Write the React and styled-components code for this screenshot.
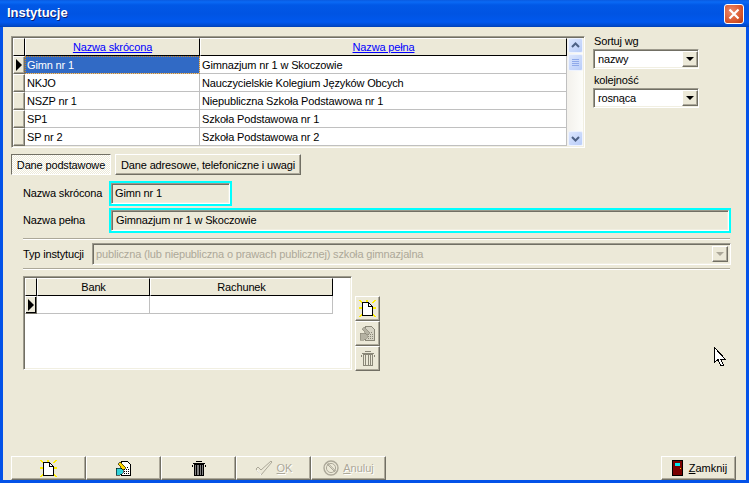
import React from "react";
import styled, { createGlobalStyle, css } from "styled-components";

const Global = createGlobalStyle`
  html, body { margin: 0; padding: 0; background: #ece9d8; }
  * { box-sizing: border-box; }
`;

const sunken = css`
  border: 1px solid;
  border-color: #9d9a8c #fff #fff #9d9a8c;
  box-shadow: inset 1px 1px 0 #716f64, inset -1px -1px 0 #f1efe2;
`;

const raised = css`
  border: 1px solid;
  border-color: #fff #716f64 #716f64 #fff;
  box-shadow: inset -1px -1px 0 #aca899;
  background: #ece9d8;
`;

const Window = styled.div`
  position: relative;
  width: 749px;
  height: 483px;
  display: flex;
  flex-direction: column;
  overflow: hidden;
  background: #ece9d8;
  font-family: "Liberation Sans", sans-serif;
  font-size: 11px;
  letter-spacing: -0.15px;
  color: #000;
`;

const TitleBar = styled.div`
  height: 27px;
  flex: none;
  display: flex;
  align-items: center;
  justify-content: space-between;
  padding: 0 5px 2px 7px;
  background: linear-gradient(180deg, #0a5be0 0, #0a6af5 2px, #0158e6 5px, #0054e3 14px, #0058ee 22px, #0048c8 26px, #003fb0 27px);
`;

const Title = styled.span`
  font-size: 13px;
  font-weight: 700;
  letter-spacing: 0;
  color: #fff;
  text-shadow: 1px 1px 0 #0f1e70;
`;

const CloseButton = styled.div`
  width: 20px;
  height: 20px;
  margin-top: 2px;
  border: 1px solid #fff;
  border-radius: 3px;
  background: radial-gradient(circle at 35% 35%, #eb8a6c, #d9582e 60%, #b23a14);
  display: flex;
  align-items: center;
  justify-content: center;
`;

const Body = styled.div`
  flex: 1;
  display: flex;
  flex-direction: column;
  min-height: 0;
  border-style: solid;
  border-color: #0352e8;
  border-width: 0 3px 3px 3px;
  padding: 9px 10px 0 8px;
`;

const TopRow = styled.div`
  display: flex;
  gap: 8px;
  height: 112px;
`;

const GridFrame = styled.div`
  ${sunken}
  position: relative;
  width: ${(p) => p.$width}px;
  height: ${(p) => p.$height}px;
  padding: 1px;
  background: ${(p) => p.$bg};
  display: flex;
  flex: none;
`;

const GridBody = styled.div`
  flex: 1;
  display: flex;
  flex-direction: column;
`;

const Row = styled.div`
  display: grid;
  grid-template-columns: ${(p) => p.$cols};
  height: ${(p) => p.$height}px;
  flex: none;
`;

const HeadCell = styled.div`
  ${raised}
  border-color: #fff #000 #000 #fff;
  box-shadow: none;
  display: flex;
  align-items: center;
  justify-content: center;
  color: ${(p) => (p.$link ? "#0000ff" : "#000")};
  text-decoration: ${(p) => (p.$link ? "underline" : "none")};
`;

const Indicator = styled.div`
  ${raised}
  box-shadow: ${(p) => (p.$dark ? "inset -1px -1px 0 #000" : "inset -1px -1px 0 #aca899")};
  display: flex;
  align-items: center;
  justify-content: center;
`;

const Arrow = styled.i`
  display: block;
  width: 0;
  height: 0;
  border-style: solid;
  border-width: 6px 0 6px 6px;
  border-color: transparent transparent transparent #000;
`;

const Cell = styled.div`
  display: flex;
  align-items: center;
  padding-left: 2px;
  background: ${(p) => (p.$selected ? "#316ac5" : "#fff")};
  color: ${(p) => (p.$selected ? "#fff" : "#000")};
  border-right: 1px solid #c0c0c0;
  border-bottom: 1px solid #c0c0c0;
  outline: ${(p) => (p.$selected ? "1px dotted #c9882a" : "none")};
  outline-offset: -1px;
  white-space: nowrap;
  overflow: hidden;
`;

const Scrollbar = styled.div`
  width: 16px;
  flex: none;
  display: flex;
  flex-direction: column;
  align-items: center;
  background: linear-gradient(90deg, #f3f1ec, #fdfdfa);
`;

const ScrollButton = styled.div`
  width: 15px;
  height: ${(p) => p.$height || 16}px;
  margin-top: ${(p) => p.$top || 0}px;
  border: 1px solid #eef3fe;
  border-radius: 2px;
  background: linear-gradient(135deg, #dce6fd, #b9cdf9);
  display: flex;
  align-items: center;
  justify-content: center;
`;

const SortPanel = styled.div`
  width: 106px;
  display: flex;
  flex-direction: column;
  margin-top: -2px;
`;

const SortLabel = styled.div`
  height: 15px;
  line-height: 15px;
  padding-left: 1px;
`;

const Combo = styled.div`
  ${sunken}
  height: 20px;
  background: #fff;
  display: flex;
  align-items: center;
  justify-content: space-between;
  padding: 2px 0 2px 4px;
  margin-bottom: ${(p) => p.$gap || 0}px;
`;

const ComboButton = styled.div`
  ${raised}
  width: 16px;
  height: 16px;
  display: flex;
  align-items: center;
  justify-content: center;
`;

const ComboArrow = styled.i`
  display: block;
  width: 0;
  height: 0;
  border-style: solid;
  border-width: 4px 4px 0 4px;
  border-color: ${(p) => (p.$off ? "#aca899" : "#000")} transparent transparent transparent;
`;

const Tabs = styled.div`
  display: flex;
  gap: 4px;
  margin-top: 6px;
  height: 21px;
`;

const Tab = styled.div`
  width: ${(p) => p.$width}px;
  display: flex;
  align-items: center;
  justify-content: center;
  white-space: nowrap;
  ${(p) => (p.$active ? css`
    border: 1px solid;
    border-color: #716f64 #fff #fff #716f64;
    background: repeating-conic-gradient(#fff 0 25%, #ece9d8 0 50%) 0 0 / 2px 2px;
  ` : raised)}
`;

const Form = styled.div`
  display: flex;
  flex-direction: column;
  padding: 6px 0 0 12px;
  width: 720px;
`;

const FieldRow = styled.div`
  display: flex;
  align-items: center;
  margin-bottom: 2px;
`;

const FieldLabel = styled.div`
  width: 86px;
  flex: none;
  padding-bottom: 1px;
`;

const Highlight = styled.div`
  width: ${(p) => p.$width}px;
  height: 25px;
  border: 2px solid #0ff;
  display: flex;
`;

const FieldInput = styled.div`
  ${sunken}
  flex: 1;
  background: #ece9d8;
  display: flex;
  align-items: center;
  padding: 0 0 1px ${(p) => p.$pad || 3}px;
`;

const Separator = styled.div`
  height: 2px;
  width: 707px;
  flex: none;
  margin: ${(p) => p.$margin};
  background: linear-gradient(180deg, #aca899 50%, #fff 50%);
`;

const TypeRow = styled.div`
  display: flex;
  align-items: center;
  height: 22px;
`;

const TypeLabel = styled.div`
  width: 69px;
  flex: none;
`;

const DisabledCombo = styled.div`
  ${sunken}
  flex: 1;
  height: 22px;
  background: #ece9d8;
  color: #aca899;
  display: flex;
  align-items: center;
  justify-content: space-between;
  padding: 2px 2px 2px 3px;
`;

const BankSection = styled.div`
  display: flex;
  gap: 3px;
`;

const SideButtons = styled.div`
  display: flex;
  flex-direction: column;
  margin-top: 20px;
`;

const SideButton = styled.div`
  ${raised}
  width: 25px;
  height: 25px;
  display: flex;
  align-items: center;
  justify-content: center;
`;

const Footer = styled.div`
  margin-top: auto;
  height: 24px;
  display: flex;
  justify-content: space-between;
`;

const ToolGroup = styled.div`
  display: flex;
`;

const ToolButton = styled.div`
  ${raised}
  width: 75px;
  height: 24px;
  padding-left: ${(p) => p.$indent || 0}px;
  display: flex;
  align-items: center;
  justify-content: center;
  gap: ${(p) => p.$gap || 0}px;
  color: ${(p) => (p.$off ? "#aca899" : "#000")};
  text-shadow: ${(p) => (p.$off ? "1px 1px 0 #fff" : "none")};
  letter-spacing: 0;
`;

const Key = styled.span`
  text-decoration: underline;
`;

const Cursor = styled.svg`
  position: absolute;
  left: 714px;
  top: 347px;
`;

const NewIcon = () => (
  <svg width="17" height="17" viewBox="0 0 17 17" shapeRendering="crispEdges">
    <path
      fill="#ffee00"
      d="M0 0h2v1H0zM1 1h2v1H1zM2 2h2v1H2zM15 0h2v1h-2zM14 1h2v1h-2zM13 2h2v1h-2zM0 16h2v1H0zM1 15h2v1H1zM2 14h2v1H2zM15 16h2v1h-2zM14 15h2v1h-2zM13 14h2v1h-2zM13 7h4v2h-4zM0 7h3v2H0zM7 0h2v2H7z"
    />
    <path d="M3.5 2.5h6l4 4v9h-10z" fill="#fff" stroke="#000" />
    <path d="M9.5 2.5v4h4" fill="none" stroke="#000" />
  </svg>
);

const EditIcon = ({ off }) => {
  const line = off ? "#8a8778" : "#000";
  return (
    <svg width="17" height="17" viewBox="0 0 17 17" shapeRendering="crispEdges">
      <path d="M6.5 1.5h6l3 3v11h-9z" fill={off ? "#d6d3c4" : "#fff"} stroke={line} />
      <path d="M8 7h6M9 9h5M9 11h5M9 13h5" stroke={line} strokeDasharray="1 1" />
      <path d="M5 2l6 6-3 2-5-6z" fill={off ? "#b5b2a3" : "#ffd800"} stroke={line} strokeWidth="0.6" />
      <path d="M1 8h4l3 2v3l-3 2H1z" fill={off ? "#b5b2a3" : "#2fd0d8"} stroke={line} strokeWidth="0.6" />
    </svg>
  );
};

const TrashIcon = ({ off }) => {
  const line = off ? "#8a8778" : "#000";
  return (
    <svg width="14" height="17" viewBox="0 0 14 17" shapeRendering="crispEdges">
      <path d="M4 1.5h6M1 3.5h12" stroke={line} fill="none" />
      <path d="M2 2.5h10v1H2zM0 5h1v2H0zM13 5h1v2h-1z" fill={line} />
      <path d="M2.5 4.5h9v11h-9z" fill={off ? "#ece9d8" : "#808080"} stroke={line} />
      <path d="M4.5 5v10M7 5v10M9.5 5v10" stroke={line} />
    </svg>
  );
};

const CheckIcon = () => (
  <svg width="18" height="16" viewBox="0 0 18 16">
    <path d="M1 9l2-2 3 3 10-9 1 1L6 15z" fill="#ece9d8" stroke="#aca899" />
    <path d="M2 10l4 5" stroke="#fff" />
  </svg>
);

const BanIcon = () => (
  <svg width="16" height="16" viewBox="0 0 16 16" fill="none">
    <circle cx="8" cy="8" r="7" stroke="#aca899" strokeWidth="1.4" />
    <circle cx="8" cy="8" r="4.6" stroke="#aca899" />
    <path d="M3.5 3.5l9 9M4.5 2.8l8.7 8.7" stroke="#aca899" />
  </svg>
);

const DoorIcon = () => (
  <svg width="11" height="16" viewBox="0 0 11 16" shapeRendering="crispEdges">
    <rect x="0.5" y="0.5" width="10" height="15" fill="#7a0000" stroke="#000" />
    <rect x="3" y="3" width="5" height="3" fill="#00e8f0" />
    <rect x="8" y="8" width="1" height="1" fill="#ffd800" />
  </svg>
);

const ChevronUp = () => (
  <svg width="9" height="7" viewBox="0 0 9 7" fill="none">
    <path d="M1 5l3.5-3.5L8 5" stroke="#4d6185" strokeWidth="2" />
  </svg>
);

const ChevronDown = () => (
  <svg width="9" height="7" viewBox="0 0 9 7" fill="none">
    <path d="M1 2l3.5 3.5L8 2" stroke="#4d6185" strokeWidth="2" />
  </svg>
);

const Grip = () => (
  <svg width="7" height="7" viewBox="0 0 7 7" shapeRendering="crispEdges">
    <path d="M0 .5h7M0 2.5h7M0 4.5h7M0 6.5h7" stroke="#8fa9ea" />
  </svg>
);

const rows = [
  ["Gimn nr 1", "Gimnazjum nr 1 w Skoczowie"],
  ["NKJO", "Nauczycielskie Kolegium Języków Obcych"],
  ["NSZP nr 1", "Niepubliczna Szkoła Podstawowa nr 1"],
  ["SP1", "Szkoła Podstawowa nr 1"],
  ["SP nr 2", "Szkoła Podstawowa nr 2"],
];

const topCols = "12px 175px 367px";
const bankCols = "12px 113px 183px";

export default function App() {
  return (
    <Window>
      <Global />
      <TitleBar>
        <Title>Instytucje</Title>
        <CloseButton>
          <svg width="12" height="12" viewBox="0 0 12 12">
            <path d="M1.5 1.5l9 9M10.5 1.5l-9 9" stroke="#fff" strokeWidth="2.2" />
          </svg>
        </CloseButton>
      </TitleBar>
      <Body>
        <TopRow>
          <GridFrame $width={574} $height={112} $bg="#ece9d8">
            <GridBody>
              <Row $cols={topCols} $height={18}>
                <HeadCell />
                <HeadCell $link>Nazwa skrócona</HeadCell>
                <HeadCell $link>Nazwa pełna</HeadCell>
              </Row>
              {rows.map((r, i) => (
                <Row key={r[0]} $cols={topCols} $height={18}>
                  <Indicator>{i === 0 && <Arrow />}</Indicator>
                  <Cell $selected={i === 0}>{r[0]}</Cell>
                  <Cell>{r[1]}</Cell>
                </Row>
              ))}
            </GridBody>
            <Scrollbar>
              <ScrollButton><ChevronUp /></ScrollButton>
              <ScrollButton $top={1} $height={17}><Grip /></ScrollButton>
              <ScrollButton $top={60}><ChevronDown /></ScrollButton>
            </Scrollbar>
          </GridFrame>
          <SortPanel>
            <SortLabel>Sortuj wg</SortLabel>
            <Combo $gap={4}>
              nazwy
              <ComboButton><ComboArrow /></ComboButton>
            </Combo>
            <SortLabel>kolejność</SortLabel>
            <Combo>
              rosnąca
              <ComboButton><ComboArrow /></ComboButton>
            </Combo>
          </SortPanel>
        </TopRow>
        <Tabs>
          <Tab $active $width={100}>Dane podstawowe</Tab>
          <Tab $width={186}>Dane adresowe, telefoniczne i uwagi</Tab>
        </Tabs>
        <Form>
          <FieldRow>
            <FieldLabel>Nazwa skrócona</FieldLabel>
            <Highlight $width={123}><FieldInput>Gimn nr 1</FieldInput></Highlight>
          </FieldRow>
          <FieldRow>
            <FieldLabel>Nazwa pełna</FieldLabel>
            <Highlight $width={622}><FieldInput $pad={4}>Gimnazjum nr 1 w Skoczowie</FieldInput></Highlight>
          </FieldRow>
          <Separator $margin="3px 0 3px" />
          <TypeRow>
            <TypeLabel>Typ instytucji</TypeLabel>
            <DisabledCombo>
              publiczna (lub niepubliczna o prawach publicznej) szkoła gimnazjalna
              <ComboButton><ComboArrow $off /></ComboButton>
            </DisabledCombo>
          </TypeRow>
          <Separator $margin="3px 0 6px" />
          <BankSection>
            <GridFrame $width={329} $height={94} $bg="#fff">
              <GridBody>
                <Row $cols={bankCols} $height={18}>
                  <HeadCell />
                  <HeadCell>Bank</HeadCell>
                  <HeadCell>Rachunek</HeadCell>
                </Row>
                <Row $cols={bankCols} $height={18}>
                  <Indicator $dark><Arrow /></Indicator>
                  <Cell />
                  <Cell />
                </Row>
              </GridBody>
            </GridFrame>
            <SideButtons>
              <SideButton><NewIcon /></SideButton>
              <SideButton><EditIcon off /></SideButton>
              <SideButton><TrashIcon off /></SideButton>
            </SideButtons>
          </BankSection>
        </Form>
        <Footer>
          <ToolGroup>
            <ToolButton><NewIcon /></ToolButton>
            <ToolButton><EditIcon /></ToolButton>
            <ToolButton><TrashIcon /></ToolButton>
            <ToolButton $off $gap={4}><CheckIcon /><span><Key>O</Key>K</span></ToolButton>
            <ToolButton $off $gap={4}><BanIcon /><span><Key>A</Key>nuluj</span></ToolButton>
          </ToolGroup>
          <ToolButton $gap={6} $indent={2}><DoorIcon /><span><Key>Z</Key>amknij</span></ToolButton>
        </Footer>
      </Body>
      <Cursor width="12" height="21" viewBox="0 0 12 21" shapeRendering="crispEdges">
        <path d="M.5.5v15l3.5-3 2.5 6h3l-2.5-6h4.5z" fill="#fff" stroke="#000" />
      </Cursor>
    </Window>
  );
}
